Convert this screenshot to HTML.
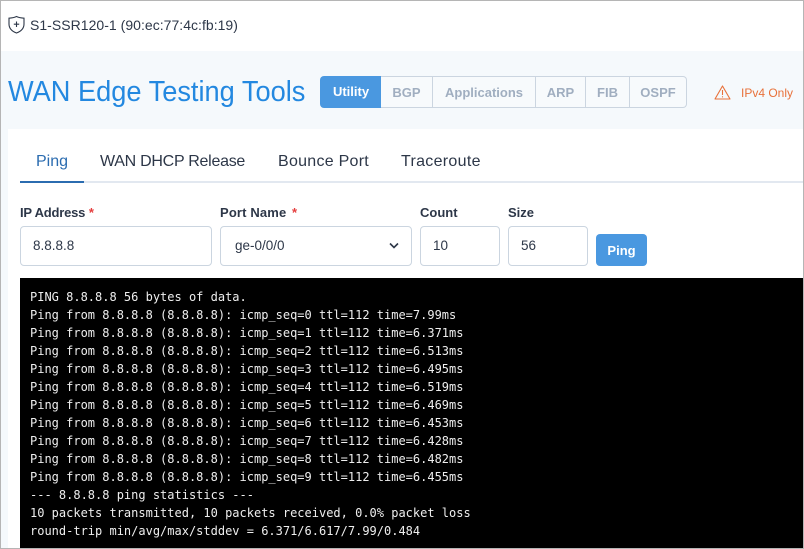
<!DOCTYPE html>
<html><head><meta charset="utf-8">
<style>
*{box-sizing:border-box}
html,body{margin:0;padding:0}
body{width:804px;height:549px;position:relative;overflow:hidden;background:#fff;font-family:"Liberation Sans","Noto Sans CJK SC",sans-serif;color:#2d3748}
.a{position:absolute;white-space:nowrap}
.input{position:absolute;top:226px;height:40px;background:#fff;border:1px solid #cbd5e0;border-radius:4px;font-size:13.5px;line-height:38px;padding-left:12px;color:#2d3748}
.label{position:absolute;top:204px;font-size:13px;line-height:18px;font-weight:bold;color:#2d3748}
.label i{color:#e53e3e;font-style:normal}
.seg{position:absolute;top:76px;height:32px;border:1px solid #cbd5e0;border-left:0;background:#f7fafc;color:#a0aec0;font-size:13px;font-weight:bold;line-height:31px;text-align:center}
.tab{position:absolute;top:151px;font-size:16px;line-height:22px;color:#2d3748}
pre{margin:0;font-family:"DejaVu Sans Mono","Liberation Mono",monospace;font-size:12px;line-height:18px;color:#eee}
</style></head>
<body>
<div class="a" style="left:0;top:51px;width:804px;height:78px;background:#f5f9fc"></div>
<div class="a" style="left:1px;top:51px;width:7px;height:498px;background:#f5f9fc"></div>

<svg class="a" style="left:7px;top:15px" width="20" height="20" viewBox="0 0 20 20" fill="none" stroke="#2d3748" stroke-width="1.1">
<path d="M2 3.2 C5 3 7.5 2.5 9.5 1.5 C11.5 2.5 14 3 17 3.2 V9 C17 13.5 13.5 16.5 9.5 18 C5.5 16.5 2 13.5 2 9 Z"/>
<path d="M9.5 6.5 V12 M6.8 9.2 H12.2"/>
</svg>
<div class="a" style="left:30px;top:15px;font-size:14px;line-height:20px;color:#2d3748;letter-spacing:.03px">S1-SSR120-1 (90:ec:77:4c:fb:19)</div>

<div class="a" style="left:8px;top:73px;font-size:29px;line-height:38px;color:#2388e0;transform:scaleX(.938);transform-origin:0 0">WAN Edge Testing Tools</div>

<div class="a" style="left:320px;top:76px;width:62px;height:32px;background:#4a98e0;border-radius:4px 0 0 4px;color:#fff;font-size:13px;font-weight:bold;line-height:32px;text-align:center">Utility</div>
<div class="seg" style="left:381px;width:52px;border-left:0">BGP</div>
<div class="seg" style="left:433px;width:103px">Applications</div>
<div class="seg" style="left:536px;width:50px">ARP</div>
<div class="seg" style="left:586px;width:44px">FIB</div>
<div class="seg" style="left:630px;width:57px;border-radius:0 4px 4px 0">OSPF</div>

<svg class="a" style="left:714px;top:85px" width="17" height="15" viewBox="0 0 17 15" fill="none" stroke="#e8713a" stroke-width="1.1">
<path d="M8.5 1 L16 14 H1 Z" stroke-linejoin="round"/>
<path d="M8.5 5 V10 M8.5 11.2 V12.4"/>
</svg>
<div class="a" style="left:741px;top:84px;font-size:12px;line-height:18px;color:#e8713a">IPv4 Only</div>

<div class="tab" style="left:36px;color:#2b6cb0">Ping</div>
<div class="tab" style="left:100px;letter-spacing:-.27px">WAN DHCP Release</div>
<div class="tab" style="left:278px;letter-spacing:.27px">Bounce Port</div>
<div class="tab" style="left:401px;letter-spacing:.3px">Traceroute</div>
<div class="a" style="left:20px;top:181px;width:784px;height:2px;background:#e2e8f0"></div>
<div class="a" style="left:20px;top:181px;width:64px;height:2px;background:#2b6cb0"></div>

<div class="label" style="left:20px"><span style="letter-spacing:-.2px">IP Address</span> <i>*</i></div>
<div class="label" style="left:220px"><span style="letter-spacing:.15px">Port Name</span> <i style="margin-left:2px">*</i></div>
<div class="label" style="left:420px">Count</div>
<div class="label" style="left:508px">Size</div>

<div class="input" style="left:20px;width:192px">8.8.8.8</div>
<div class="input" style="left:220px;width:192px;padding-left:14px">ge-0/0/0
<svg class="a" style="left:167px;top:15px" width="12" height="8" viewBox="0 0 12 8" fill="none" stroke="#2d3748" stroke-width="1.6"><path d="M2 1.5 L6 5.5 L10 1.5"/></svg>
</div>
<div class="input" style="left:420px;width:80px">10</div>
<div class="input" style="left:508px;width:80px">56</div>
<div class="a" style="left:596px;top:234px;width:51px;height:32px;background:#4a98e0;border-radius:4px;color:#fff;font-size:13px;font-weight:bold;line-height:33px;text-align:center">Ping</div>

<div class="a" style="left:20px;top:278px;width:783px;height:270px;background:#000;padding:10px 0 0 10px">
<pre>PING 8.8.8.8 56 bytes of data.
Ping from 8.8.8.8 (8.8.8.8): icmp_seq=0 ttl=112 time=7.99ms
Ping from 8.8.8.8 (8.8.8.8): icmp_seq=1 ttl=112 time=6.371ms
Ping from 8.8.8.8 (8.8.8.8): icmp_seq=2 ttl=112 time=6.513ms
Ping from 8.8.8.8 (8.8.8.8): icmp_seq=3 ttl=112 time=6.495ms
Ping from 8.8.8.8 (8.8.8.8): icmp_seq=4 ttl=112 time=6.519ms
Ping from 8.8.8.8 (8.8.8.8): icmp_seq=5 ttl=112 time=6.469ms
Ping from 8.8.8.8 (8.8.8.8): icmp_seq=6 ttl=112 time=6.453ms
Ping from 8.8.8.8 (8.8.8.8): icmp_seq=7 ttl=112 time=6.428ms
Ping from 8.8.8.8 (8.8.8.8): icmp_seq=8 ttl=112 time=6.482ms
Ping from 8.8.8.8 (8.8.8.8): icmp_seq=9 ttl=112 time=6.455ms
--- 8.8.8.8 ping statistics ---
10 packets transmitted, 10 packets received, 0.0% packet loss
round-trip min/avg/max/stddev = 6.371/6.617/7.99/0.484</pre>
</div>

<div class="a" style="left:0;top:0;width:804px;height:1px;background:#b5b5b5"></div>
<div class="a" style="left:0;top:0;width:1px;height:549px;background:#b5b5b5"></div>
<div class="a" style="left:803px;top:0;width:1px;height:549px;background:#b5b5b5"></div>
<div class="a" style="left:0;top:548px;width:804px;height:1px;background:#b5b5b5"></div>
</body></html>
